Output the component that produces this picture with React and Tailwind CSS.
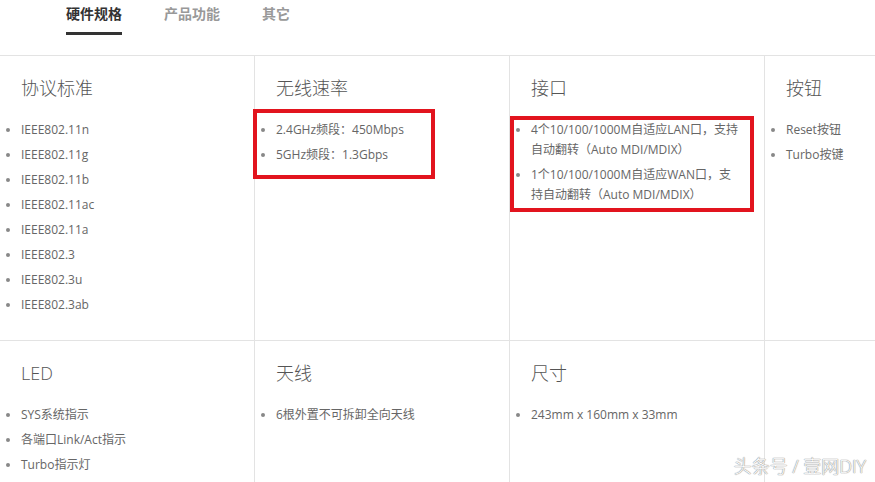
import React from 'react';

const font = { fontFamily: '"Open Sans", "Noto Sans CJK SC", sans-serif' };

const rows = [
  [
    { title: '协议标准', items: ['IEEE802.11n', 'IEEE802.11g', 'IEEE802.11b', 'IEEE802.11ac', 'IEEE802.11a', 'IEEE802.3', 'IEEE802.3u', 'IEEE802.3ab'] },
    { title: '无线速率', items: ['2.4GHz频段：450Mbps', '5GHz频段：1.3Gbps'] },
    {
      title: '接口',
      items: [
        ['4个10/100/1000M自适应LAN口，支持', '自动翻转（Auto MDI/MDIX）'],
        ['1个10/100/1000M自适应WAN口，支', '持自动翻转（Auto MDI/MDIX）'],
      ],
    },
    { title: '按钮', items: ['Reset按钮', 'Turbo按键'] },
  ],
  [
    { title: 'LED', items: ['SYS系统指示', '各端口Link/Act指示', 'Turbo指示灯'] },
    { title: '天线', items: ['6根外置不可拆卸全向天线'] },
    { title: '尺寸', items: ['243mm x 160mm x 33mm'] },
    { title: '', items: [] },
  ],
];

function Cell({ cell, last }) {
  return (
    <div className={`pt-5 pl-[21px] ${last ? 'flex-1' : 'w-[255px] border-r border-[#e3e3e3] shrink-0'}`}>
      <div className="text-[18px] leading-6 font-light text-[#555] h-6 whitespace-nowrap">{cell.title}</div>
      <ul className="mt-5 list-disc list-outside marker:text-[#888] text-[12px] leading-5 text-[#666]">
        {cell.items.map((it, i) => (
          <li key={i} className="mb-[5px] whitespace-nowrap">
            {Array.isArray(it) ? (
              <>
                {it[0]}
                <br />
                {it[1]}
              </>
            ) : (
              it
            )}
          </li>
        ))}
      </ul>
    </div>
  );
}

export default function App() {
  return (
    <div className="relative w-[875px] h-[482px] overflow-hidden bg-white" style={font}>
      <div className="h-[56px] border-b border-[#e3e3e3] flex gap-[42px] pl-[66px] pt-1">
        <div className="flex flex-col">
          <span className="text-[14px] leading-5 font-bold text-[#333]">硬件规格</span>
          <span className="mt-2 h-[3px] bg-[#333]" />
        </div>
        <span className="text-[14px] leading-5 font-bold text-[#999]">产品功能</span>
        <span className="text-[14px] leading-5 font-bold text-[#999]">其它</span>
      </div>

      {rows.map((row, r) => (
        <div key={r} className="flex h-[285px] border-b border-[#e3e3e3]">
          {row.map((cell, c) => (
            <Cell key={c} cell={cell} last={c === row.length - 1} />
          ))}
        </div>
      ))}

      <div className="absolute left-[253px] top-[109px] w-[182px] h-[70px] border-4 border-[#e2141e]" />
      <div className="absolute left-[510px] top-[116px] w-[244px] h-[96px] border-4 border-[#e2141e]" />

      <div
        className="absolute right-[9px] top-[454px] text-[18px] leading-6 font-light text-white whitespace-nowrap"
        style={{ textShadow: '0 0 1px #999, 0 0 1px #999, 0 0 1px #999' }}
      >
        头条号 / 壹网DIY
      </div>
    </div>
  );
}
